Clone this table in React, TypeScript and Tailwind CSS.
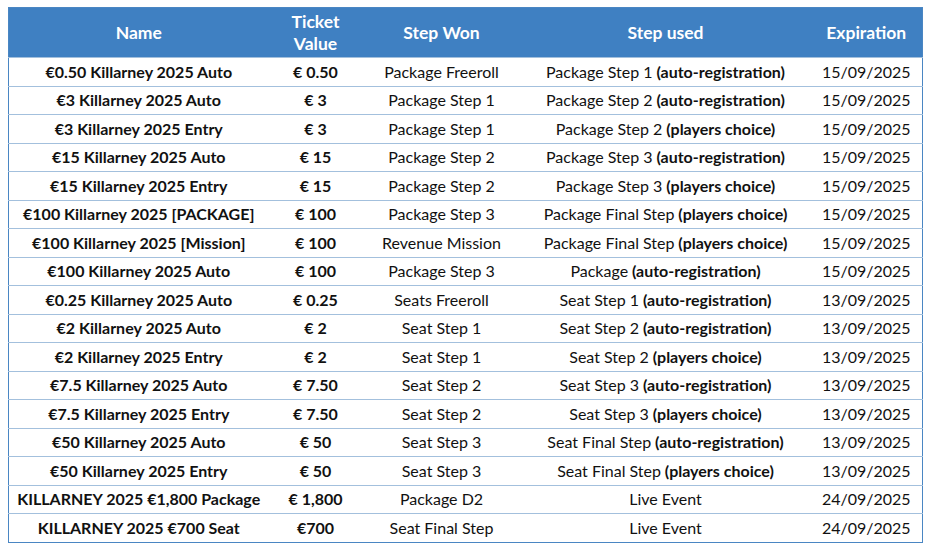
import React from 'react';

interface Ticket {
  name: string;
  value: string;
  won: string;
  used: string;
  usedBold?: string;
  expires: string;
}

const rows: Ticket[] = [
  { name: '€0.50 Killarney 2025 Auto', value: '€ 0.50', won: 'Package Freeroll', used: 'Package Step 1', usedBold: '(auto-registration)', expires: '15/09/2025' },
  { name: '€3 Killarney 2025 Auto', value: '€ 3', won: 'Package Step 1', used: 'Package Step 2', usedBold: '(auto-registration)', expires: '15/09/2025' },
  { name: '€3 Killarney 2025 Entry', value: '€ 3', won: 'Package Step 1', used: 'Package Step 2', usedBold: '(players choice)', expires: '15/09/2025' },
  { name: '€15 Killarney 2025 Auto', value: '€ 15', won: 'Package Step 2', used: 'Package Step 3', usedBold: '(auto-registration)', expires: '15/09/2025' },
  { name: '€15 Killarney 2025 Entry', value: '€ 15', won: 'Package Step 2', used: 'Package Step 3', usedBold: '(players choice)', expires: '15/09/2025' },
  { name: '€100 Killarney 2025 [PACKAGE]', value: '€ 100', won: 'Package Step 3', used: 'Package Final Step', usedBold: '(players choice)', expires: '15/09/2025' },
  { name: '€100 Killarney 2025 [Mission]', value: '€ 100', won: 'Revenue Mission', used: 'Package Final Step', usedBold: '(players choice)', expires: '15/09/2025' },
  { name: '€100 Killarney 2025 Auto', value: '€ 100', won: 'Package Step 3', used: 'Package', usedBold: '(auto-registration)', expires: '15/09/2025' },
  { name: '€0.25 Killarney 2025 Auto', value: '€ 0.25', won: 'Seats Freeroll', used: 'Seat Step 1', usedBold: '(auto-registration)', expires: '13/09/2025' },
  { name: '€2 Killarney 2025 Auto', value: '€ 2', won: 'Seat Step 1', used: 'Seat Step 2', usedBold: '(auto-registration)', expires: '13/09/2025' },
  { name: '€2 Killarney 2025 Entry', value: '€ 2', won: 'Seat Step 1', used: 'Seat Step 2', usedBold: '(players choice)', expires: '13/09/2025' },
  { name: '€7.5 Killarney 2025 Auto', value: '€ 7.50', won: 'Seat Step 2', used: 'Seat Step 3', usedBold: '(auto-registration)', expires: '13/09/2025' },
  { name: '€7.5 Killarney 2025 Entry', value: '€ 7.50', won: 'Seat Step 2', used: 'Seat Step 3', usedBold: '(players choice)', expires: '13/09/2025' },
  { name: '€50 Killarney 2025 Auto', value: '€ 50', won: 'Seat Step 3', used: 'Seat Final Step', usedBold: '(auto-registration)', expires: '13/09/2025' },
  { name: '€50 Killarney 2025 Entry', value: '€ 50', won: 'Seat Step 3', used: 'Seat Final Step', usedBold: '(players choice)', expires: '13/09/2025' },
  { name: 'KILLARNEY 2025 €1,800 Package', value: '€ 1,800', won: 'Package D2', used: 'Live Event', expires: '24/09/2025' },
  { name: 'KILLARNEY 2025 €700 Seat', value: '€700', won: 'Seat Final Step', used: 'Live Event', expires: '24/09/2025' },
];

export default function App() {
  return (
    <div className="w-[930px] h-[558px] bg-white pt-[7px] pl-[8px] font-['Lato',sans-serif] text-[#111]">
      <table className="w-[914px] border-collapse border border-[#4a86c3] table-fixed">
        <colgroup>
          <col className="w-[260px]" />
          <col className="w-[94px]" />
          <col className="w-[158px]" />
          <col className="w-[290px]" />
          <col className="w-[112px]" />
        </colgroup>
        <thead>
          <tr className="h-[50px] bg-[#3f80c2] text-white text-[17.5px] font-bold leading-[22px]">
            <th className="text-center">Name</th>
            <th className="text-center">Ticket<br />Value</th>
            <th className="text-center">Step Won</th>
            <th className="text-center">Step used</th>
            <th className="text-center">Expiration</th>
          </tr>
        </thead>
        <tbody className="text-[16px] leading-[20px]">
          {rows.map((r, i) => (
            <tr key={i} className="h-[28.5px] border-t border-[#a3c0dd]">
              <td className="text-center font-bold p-0 whitespace-nowrap">{r.name}</td>
              <td className="text-center font-bold p-0 whitespace-nowrap">{r.value}</td>
              <td className="text-center p-0 whitespace-nowrap">{r.won}</td>
              <td className="text-center p-0 whitespace-nowrap">
                {r.used}
                {r.usedBold && <span className="font-bold"> {r.usedBold}</span>}
              </td>
              <td className="text-center p-0 whitespace-nowrap">{r.expires}</td>
            </tr>
          ))}
        </tbody>
      </table>
    </div>
  );
}
